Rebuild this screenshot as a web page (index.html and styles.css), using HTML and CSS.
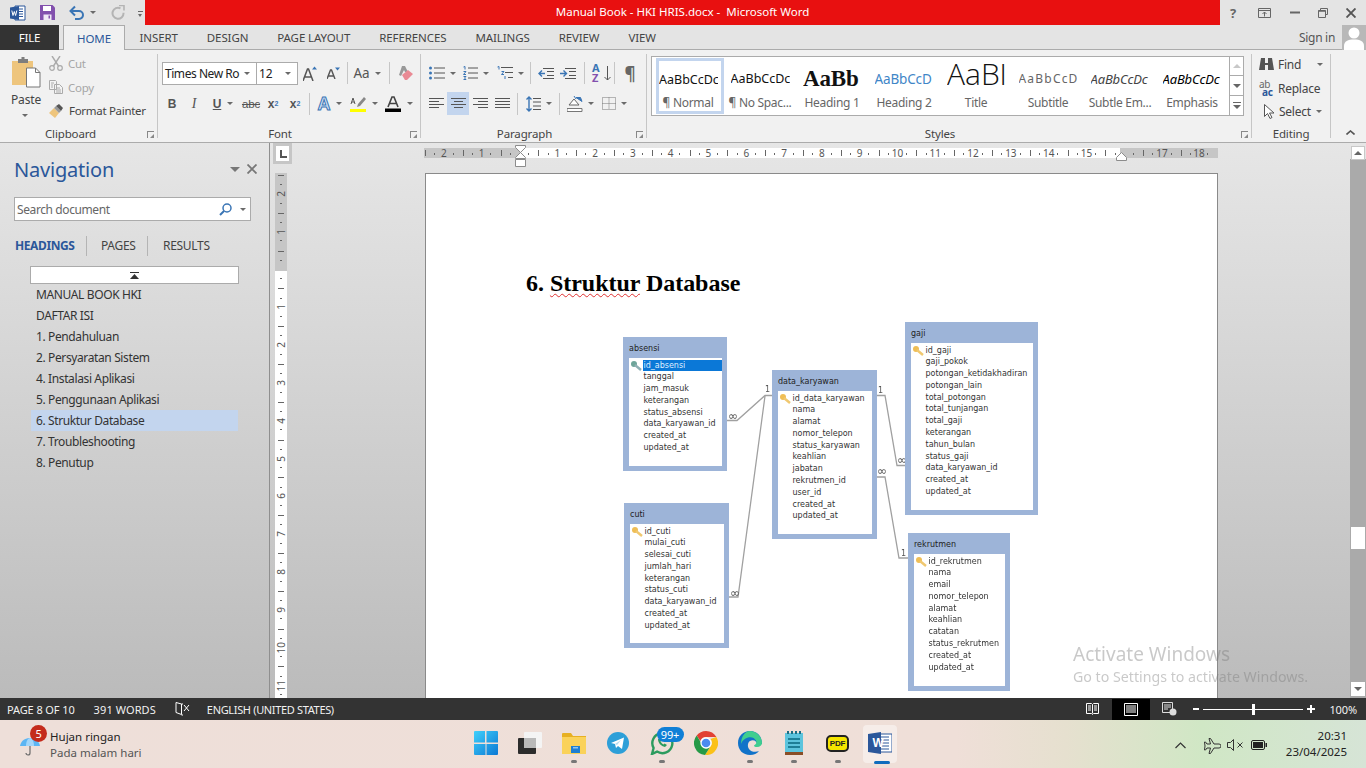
FILE: index.html
```html
<!DOCTYPE html>
<html lang="en">
<head>
<meta charset="utf-8">
<title>Manual Book - HKI HRIS.docx - Microsoft Word</title>
<link rel="stylesheet" href="styles.css">
</head>
<body>
<div class="app">
  <header class="titlebar">
    <div class="qat">
      <svg class="q-word" width="16" height="16" viewBox="0 0 16 16"><path d="M5 1h10v14H5z" fill="#fff" stroke="#2b579a"/><path d="M8 4h5M8 6.500h5M8 9h5M8 11.500h5" stroke="#2b579a"/><path d="M0 2.500 9 1v14L0 13.500z" fill="#2b579a"/><path d="M1.800 5.500l1.200 5 1.300-4 1.300 4 1.200-5" fill="none" stroke="#fff" stroke-width="1"/></svg>
      <svg class="q-save" width="15" height="15" viewBox="0 0 15 15"><path d="M0 0h12.500L15 2.500V15H0z" fill="#8250ad"/><path d="M3 1h8v5H3z" fill="#fff"/><path d="M3.500 9.500h8V15h-8z" fill="#f0e8f6"/><path d="M8.500 10.500h1.500v3H8.500z" fill="#8250ad"/></svg>
      <svg class="q-undo" width="15" height="15" viewBox="0 0 15 15"><path d="M2 6h8a3.700 3.700 0 0 1 0 8H6" fill="none" stroke="#3a75b5" stroke-width="2"/><path d="M6 1.500 1.500 6 6 10.500" fill="none" stroke="#3a75b5" stroke-width="2"/></svg>
      <span class="caret q-c1"></span>
      <svg class="q-redo" width="14" height="15" viewBox="0 0 14 15"><path d="M9.500 3.300a5.500 5.500 0 1 0 3 4.500" fill="none" stroke="#b4b4b4" stroke-width="2"/><path d="M8 .5h5v5" fill="none" stroke="#b4b4b4" stroke-width="1.600"/></svg>
      <span class="q-custom"><i></i><span class="caret"></span></span>
    </div>
    <div class="title-red">Manual Book - HKI HRIS.docx -&nbsp; Microsoft Word</div>
    <div class="winctl">
      <span class="w-help">?</span>
      <svg width="13" height="10" viewBox="0 0 13 10"><path d="M.5.500h12v9H.5zM.5 2.500h12M6.500 8.500V4M4.500 6l2-2 2 2" fill="none" stroke="#666"/></svg>
      <svg width="10" height="3" viewBox="0 0 10 3"><path d="M0 1.500h10" stroke="#666" stroke-width="2"/></svg>
      <svg width="10" height="10" viewBox="0 0 10 10"><path d="M2.500 2.500V.5h7v6H7.500M.5 2.500h7v7h-7z" fill="none" stroke="#666"/><path d="M.5 3h7" stroke="#666" stroke-width="1.500"/></svg>
      <svg width="10" height="10" viewBox="0 0 10 10"><path d="M.5.500l9 9M9.500.500l-9 9" stroke="#555" stroke-width="1.900"/></svg>
    </div>
  </header>

  <nav class="tabs">
    <span class="tab-file">FILE</span>
    <span class="tab tab-on">HOME</span>
    <span class="tab">INSERT</span>
    <span class="tab">DESIGN</span>
    <span class="tab">PAGE LAYOUT</span>
    <span class="tab">REFERENCES</span>
    <span class="tab">MAILINGS</span>
    <span class="tab">REVIEW</span>
    <span class="tab">VIEW</span>
    <span class="signin">Sign in</span>
    <span class="avatar"><svg width="24" height="25" viewBox="0 0 24 25"><circle cx="12" cy="8" r="5.500" fill="#fff"/><path d="M2 25v-4c0-5 4-6.500 10-6.500S22 16 22 21v4z" fill="#fff"/></svg></span>
  </nav>

  <section class="ribbon">
    <div class="group g-clip">
      <div class="clip-body">
        <div class="paste">
          <svg width="29" height="31" viewBox="0 0 29 31"><path d="M0 4h21v24H0z" fill="#eec57d"/><path d="M6 2h3.500V0h3v2H16v4H6z" fill="#7d7d7d"/><path d="M14.500 11h9l4.500 4.500V30H14.500z" fill="#fff" stroke="#777"/><path d="M23.500 11v4.500H28" fill="none" stroke="#777"/></svg>
          <span class="paste-l">Paste</span>
          <span class="caret"></span>
        </div>
        <div class="clip-list">
          <div class="clip-item off"><svg width="14" height="15" viewBox="0 0 14 15"><path d="M3 0l6.500 10M11 0 4.500 10" stroke="#aaa" stroke-width="1.400" fill="none"/><circle cx="3" cy="12" r="2.300" fill="none" stroke="#aaa" stroke-width="1.200"/><circle cx="11" cy="12" r="2.300" fill="none" stroke="#aaa" stroke-width="1.200"/></svg>Cut</div>
          <div class="clip-item off"><svg width="14" height="14" viewBox="0 0 14 14"><path d="M.5.500h6l1 1v8H.5zM5.500 4.500h5l3 3v6h-8z" fill="#f3f3f3" stroke="#aaa"/><path d="M2 3h3M2 5h2M2 7h2M7 8h4M7 10h5M7 12h5" stroke="#aaa"/></svg>Copy</div>
          <div class="clip-item"><svg width="15" height="14" viewBox="0 0 15 14"><path d="M0 9l5-5 5 5-4 5z" fill="#eec57d"/><path d="M5 4l5 5 2-2-5-5z" fill="#999"/><path d="M7 2l3-2 4 4-2 3z" fill="#555"/></svg>Format Painter</div>
        </div>
      </div>
      <div class="g-label">Clipboard</div>
      <span class="launcher"></span>
    </div>

    <div class="group g-font">
      <div class="rrow r1">
        <div class="select s-font"><span>Times New Ro</span><span class="caret"></span></div>
        <div class="select s-size"><span>12</span><span class="caret"></span></div>
        <span class="cell w24"><svg width="14" height="15" viewBox="0 0 14 15"><path d="M0 15 4.500 3h1L10 15M2 11h6.500" fill="none" stroke="#555" stroke-width="1.500"/><path d="M9 3.500l2.500-3 2.500 3z" fill="#3a75b5"/></svg></span>
        <span class="cell w23"><svg width="13" height="12" viewBox="0 0 13 12"><path d="M0 12 3.500 3h1L8 12M1.500 9h5" fill="none" stroke="#555" stroke-width="1.400"/><path d="M8 .5h5L10.500 3.500z" fill="#3a75b5"/></svg></span>
        <span class="sep s4"></span>
        <span class="cell w37 gap"><span class="aa">Aa</span><span class="caret"></span></span>
        <span class="sep s6"></span>
        <span class="cell w27"><svg width="15" height="15" viewBox="0 0 15 15"><path d="M4 0h3l3 6H7L6 4 3 10 1 9z" fill="#999"/><path d="M4 9l6-5 5 4-6 6H7z" fill="#e98a94"/></svg></span>
      </div>
      <div class="rrow r2">
        <span class="cell w20 ltr b">B</span>
        <span class="cell w24 ltr it">I</span>
        <span class="cell w34 gap"><span class="ltr u">U</span><span class="caret"></span></span>
        <span class="cell w22 ltr st">abc</span>
        <span class="cell w22 ltr b">x<sub class="sb">2</sub></span>
        <span class="cell w22 ltr b">x<sup class="sp">2</sup></span>
        <span class="sep s8"></span>
        <span class="cell w32 gap"><span class="txteff">A</span><span class="caret"></span></span>
        <span class="cell w36 gap"><svg width="16" height="16" viewBox="0 0 16 16"><path d="M0 13h16v3H0z" fill="#ff0"/><path d="M7 11l1-3 6-7 2 2-6 7z" fill="#888"/><path d="M1 8 3 2l2 6M1.800 6h2.500" fill="none" stroke="#555"/></svg><span class="caret"></span></span>
        <span class="cell w34 gap"><svg width="16" height="16" viewBox="0 0 16 16"><path d="M0 12.500h16V16H0z" fill="#000"/><path d="M3 11 7 1h2l4 10M5 7.500h6" fill="none" stroke="#444" stroke-width="1.600"/></svg><span class="caret"></span></span>
      </div>
      <div class="g-label">Font</div>
      <span class="launcher"></span>
    </div>

    <div class="group g-para">
      <div class="rrow r1">
        <span class="cell w34 lft gap5"><svg width="16" height="14" viewBox="0 0 16 14"><path d="M5 2h11M5 7h11M5 12h11" stroke="#555"/><circle cx="1.500" cy="2" r="1.500" fill="#3a75b5"/><circle cx="1.500" cy="7" r="1.500" fill="#3a75b5"/><circle cx="1.500" cy="12" r="1.500" fill="#3a75b5"/></svg><span class="caret"></span></span>
        <span class="cell w34 lft gap5"><svg width="15" height="14" viewBox="0 0 15 14"><path d="M5 2h10M5 7h10M5 12h10" stroke="#555"/><path d="M.5 1 2 .5v3M.5 5.500h2.500L.5 8.500H3M.5 10.500H3L1.500 12 3 13.500H.5" fill="none" stroke="#3a75b5"/></svg><span class="caret"></span></span>
        <span class="cell w33 lft gap5"><svg width="16" height="14" viewBox="0 0 16 14"><path d="M4 1.500h12M8 6.500h8M11 11.500h5" stroke="#555"/><path d="M.5 1 2 .5v3M4.500 5.500H7L4.500 8.500H7M8 10v3" fill="none" stroke="#3a75b5"/></svg><span class="caret"></span></span>
        <span class="sep m7"></span>
        <span class="cell w22 lft"><svg width="16" height="13" viewBox="0 0 16 13"><path d="M5 1.500h11M9 4.500h7M9 8.500h7M5 11.500h11" stroke="#555"/><path d="M7 6.500H1M4 3.500l-3 3 3 3" fill="none" stroke="#3a75b5" stroke-width="1.400"/></svg></span>
        <span class="cell w24 lft"><svg width="16" height="13" viewBox="0 0 16 13"><path d="M5 1.500h11M9 4.500h7M9 8.500h7M5 11.500h11" stroke="#555"/><path d="M0 6.500h6M3.500 3.500l3 3-3 3" fill="none" stroke="#3a75b5" stroke-width="1.400"/></svg></span>
        <span class="sep m7"></span>
        <span class="cell w22 lft"><span class="sortaz"><span class="az-a">A</span><span class="az-z">Z</span></span><svg width="7" height="15" viewBox="0 0 7 15"><path d="M3.500 0v14M.5 11l3 3 3-3" fill="none" stroke="#555"/></svg></span>
        <span class="sep m8"></span>
        <span class="cell w14 pil">¶</span>
      </div>
      <div class="rrow r2">
        <span class="cell w18 lft"><svg width="15" height="13" viewBox="0 0 15 13"><path d="M0 1.500h15M0 4.500h10M0 7.500h15M0 10.500h10" stroke="#555"/></svg></span>
        <span class="cell w22 on"><svg width="15" height="13" viewBox="0 0 15 13"><path d="M0 1.500h15M3 4.500h9M0 7.500h15M3 10.500h9" stroke="#555"/></svg></span>
        <span class="cell w22 lft m4"><svg width="15" height="13" viewBox="0 0 15 13"><path d="M0 1.500h15M5 4.500h10M0 7.500h15M5 10.500h10" stroke="#555"/></svg></span>
        <span class="cell w22 lft"><svg width="15" height="13" viewBox="0 0 15 13"><path d="M0 1.500h15M0 4.500h15M0 7.500h15M0 10.500h15" stroke="#555"/></svg></span>
        <span class="sep m8"></span>
        <span class="cell w33 lft gap5"><svg width="15" height="16" viewBox="0 0 15 16"><path d="M7 2.500h8M7 6h8M7 10h8M7 13.500h8" stroke="#555"/><path d="M3 1v14M.5 3.500 3 1l2.500 2.500M.5 12.500 3 15l2.500-2.500" fill="none" stroke="#3a75b5" stroke-width="1.400"/></svg><span class="caret"></span></span>
        <span class="sep m7"></span>
        <span class="cell w35 lft gap5"><svg width="16" height="16" viewBox="0 0 16 16"><path d="M0 12.500h15v3H0z" fill="#fff" stroke="#777"/><path d="M2 9l5-6 5 6H2z" fill="#fff" stroke="#666"/><path d="M7 0l2 3M9 1.500h4.500l1.500 4z" fill="#3a75b5" stroke="#3a75b5"/></svg><span class="caret"></span></span>
        <span class="cell w30 lft gap5"><svg width="14" height="13" viewBox="0 0 14 13"><path d="M.5.500h13v12H.5zM7 .5v12M.5 6.500h13" fill="none" stroke="#777" stroke-dasharray="1 1"/></svg><span class="caret"></span></span>
      </div>
      <div class="g-label">Paragraph</div>
      <span class="launcher"></span>
    </div>

    <div class="group g-styles">
      <div class="gallery">
        <div class="sitem sel"><span class="sample sm-n">AaBbCcDc</span><span class="slabel">¶ Normal</span></div>
        <div class="sitem wide"><span class="sample sm-n">AaBbCcDc</span><span class="slabel">¶ No Spac...</span></div>
        <div class="sitem wide"><span class="sample sm-h1">AaBb</span><span class="slabel">Heading 1</span></div>
        <div class="sitem wide"><span class="sample sm-h2">AaBbCcD</span><span class="slabel">Heading 2</span></div>
        <div class="sitem wide"><span class="sample sm-t">AaBl</span><span class="slabel sl-t">Title</span></div>
        <div class="sitem wide"><span class="sample sm-st">AaBbCcD</span><span class="slabel">Subtitle</span></div>
        <div class="sitem wide"><span class="sample sm-se">AaBbCcDc</span><span class="slabel">Subtle Em...</span></div>
        <div class="sitem wide"><span class="sample sm-em">AaBbCcDc</span><span class="slabel">Emphasis</span></div>
        <div class="gscroll">
          <span class="gbtn"><i class="tri-up dim"></i></span>
          <span class="gbtn"><i class="tri-dn"></i></span>
          <span class="gbtn more"><i class="bar"></i><i class="tri-dn"></i></span>
        </div>
      </div>
      <div class="g-label">Styles</div>
      <span class="launcher"></span>
    </div>

    <div class="group g-edit">
      <div class="edit-list">
        <div class="edit-item"><svg width="15" height="13" viewBox="0 0 15 13"><path d="M2 0h4v5h3V0h4l2 12H9V7H6v5H0z" fill="#555"/></svg><span>Find</span><span class="caret c-find"></span></div>
        <div class="edit-item"><span class="replace"><span class="r-ab">ab</span><span class="r-ac">ac</span></span><span>Replace</span></div>
        <div class="edit-item sel-i"><svg width="11" height="15" viewBox="0 0 11 15"><path d="M.5.500v12l3-3 2.500 5 2-1-2.500-4.500h4.500z" fill="#fff" stroke="#555"/></svg><span>Select</span><span class="caret c-sel"></span></div>
      </div>
      <div class="g-label">Editing</div>
    </div>
    <svg class="collapse" width="9" height="5" viewBox="0 0 9 5"><path d="M.5 4.500l4-3.500 4 3.500" fill="none" stroke="#555" stroke-width="1.600"/></svg>
  </section>

  <main class="main">
    <aside class="navpane">
      <div class="nav-head"><span class="nav-title">Navigation</span><i class="nav-drop"></i><svg width="10" height="10" viewBox="0 0 10 10"><path d="M.5.500l9 9M9.500.500l-9 9" stroke="#777" stroke-width="1.800"/></svg></div>
      <div class="nav-search"><span>Search document</span><svg width="13" height="13" viewBox="0 0 13 13"><circle cx="8" cy="5" r="4" fill="none" stroke="#3a75b5" stroke-width="1.500"/><path d="M5 8l-4 4" stroke="#3a75b5" stroke-width="2"/></svg><span class="caret"></span></div>
      <div class="nav-tabs"><span class="nt nt-on">HEADINGS</span><span class="nt pg">PAGES</span><span class="nt rs">RESULTS</span></div>
      <div class="nav-list">
        <div class="nav-top"><svg width="9" height="7" viewBox="0 0 9 7"><path d="M0 .5h9" stroke="#333"/><path d="M4.500 2 9 7H0z" fill="#333"/></svg></div>
        <div class="ni">MANUAL BOOK HKI</div>
        <div class="ni">DAFTAR ISI</div>
        <div class="ni">1. Pendahuluan</div>
        <div class="ni">2. Persyaratan Sistem</div>
        <div class="ni">4. Instalasi Aplikasi</div>
        <div class="ni">5. Penggunaan Aplikasi</div>
        <div class="ni ni-on">6. Struktur Database</div>
        <div class="ni">7. Troubleshooting</div>
        <div class="ni">8. Penutup</div>
      </div>
    </aside>

    <div class="work">
      <div class="workmain">
        <div class="rulerrow">
          <span class="tabbtn"><i></i></span>
          <div class="hruler">
            <span class="hu">2</span><span class="hu">1</span><span class="hu"></span><span class="hu">1</span><span class="hu">2</span><span class="hu">3</span><span class="hu">4</span><span class="hu">5</span><span class="hu">6</span><span class="hu">7</span><span class="hu">8</span><span class="hu">9</span><span class="hu">10</span><span class="hu">11</span><span class="hu">12</span><span class="hu">13</span><span class="hu">14</span><span class="hu">15</span><span class="hu"></span><span class="hu">17</span><span class="hu hu-end">18</span>
            <svg class="mk-left" width="11" height="22" viewBox="0 0 11 22"><path d="M.5.500h10v2L5.500 7.500.5 2.500zM5.500 7.500l5 5v1h-10v-1zM.5 14.500h10v7H.5z" fill="#fff" stroke="#8c8c8c"/></svg>
            <svg class="mk-right" width="11" height="9" viewBox="0 0 11 9"><path d="M5.500.5l5 5v3H.5v-3z" fill="#fff" stroke="#8c8c8c"/></svg>
          </div>
        </div>
        <div class="docrow">
          <div class="vruler">
            <span class="vu"><b>2</b></span><span class="vu"><b>1</b></span><span class="vu"></span><span class="vu"><b>1</b></span><span class="vu"><b>2</b></span><span class="vu"><b>3</b></span><span class="vu"><b>4</b></span><span class="vu"><b>5</b></span><span class="vu"><b>6</b></span><span class="vu"><b>7</b></span><span class="vu"><b>8</b></span><span class="vu"><b>9</b></span><span class="vu"><b>10</b></span><span class="vu"><b>11</b></span>
          </div>
          <article class="page">
            <h1 class="doc-h">6. <span class="sp-err">Struktur</span> Database</h1>
            <div class="er">
              <svg class="er-lines" width="791" height="524" viewBox="0 0 791 524">
                <g fill="none" stroke="#a0a0a0" stroke-width="1.300">
                  <path d="M301 246.500h10l28-25h7"/>
                  <path d="M303 423h9l27-201"/>
                  <path d="M451 221.500h8l12 70h8"/>
                  <path d="M451 303h8l14 81h9"/>
                </g>
              </svg>
              <span class="card c1a">1</span><span class="card c2a">1</span><span class="card c3a">1</span>
              <span class="card inf i1">∞</span><span class="card inf i2">∞</span><span class="card inf i3">∞</span><span class="card inf i4">∞</span>

              <section class="tbl t-abs">
                <div class="tbl-t">absensi</div>
                <div class="tbl-b">
                  <div class="row first act"><svg class="key" width="11" height="10" viewBox="0 0 11 10"><circle cx="3" cy="3" r="3" fill="#6ea59a"/><path d="M4 4l6 5" stroke="#8fb0b4" stroke-width="2.400"/></svg><span>id_absensi</span></div>
                  <div class="row">tanggal</div><div class="row">jam_masuk</div><div class="row">keterangan</div><div class="row">status_absensi</div><div class="row">data_karyawan_id</div><div class="row">created_at</div><div class="row">updated_at</div>
                </div>
              </section>

              <section class="tbl t-cuti">
                <div class="tbl-t">cuti</div>
                <div class="tbl-b">
                  <div class="row first"><svg class="key" width="11" height="10" viewBox="0 0 11 10"><circle cx="3" cy="3" r="3" fill="#efbe55"/><path d="M4 4l6 5" stroke="#f0c870" stroke-width="2.400"/></svg>id_cuti</div>
                  <div class="row">mulai_cuti</div><div class="row">selesai_cuti</div><div class="row">jumlah_hari</div><div class="row">keterangan</div><div class="row">status_cuti</div><div class="row">data_karyawan_id</div><div class="row">created_at</div><div class="row">updated_at</div>
                </div>
              </section>

              <section class="tbl t-data">
                <div class="tbl-t">data_karyawan</div>
                <div class="tbl-b">
                  <div class="row first"><svg class="key" width="11" height="10" viewBox="0 0 11 10"><circle cx="3" cy="3" r="3" fill="#efbe55"/><path d="M4 4l6 5" stroke="#f0c870" stroke-width="2.400"/></svg>id_data_karyawan</div>
                  <div class="row">nama</div><div class="row">alamat</div><div class="row">nomor_telepon</div><div class="row">status_karyawan</div><div class="row">keahlian</div><div class="row">jabatan</div><div class="row">rekrutmen_id</div><div class="row">user_id</div><div class="row">created_at</div><div class="row">updated_at</div>
                </div>
              </section>

              <section class="tbl t-gaji">
                <div class="tbl-t">gaji</div>
                <div class="tbl-b">
                  <div class="row first"><svg class="key" width="11" height="10" viewBox="0 0 11 10"><circle cx="3" cy="3" r="3" fill="#efbe55"/><path d="M4 4l6 5" stroke="#f0c870" stroke-width="2.400"/></svg>id_gaji</div>
                  <div class="row">gaji_pokok</div><div class="row">potongan_ketidakhadiran</div><div class="row">potongan_lain</div><div class="row">total_potongan</div><div class="row">total_tunjangan</div><div class="row">total_gaji</div><div class="row">keterangan</div><div class="row">tahun_bulan</div><div class="row">status_gaji</div><div class="row">data_karyawan_id</div><div class="row">created_at</div><div class="row">updated_at</div>
                </div>
              </section>

              <section class="tbl t-rek">
                <div class="tbl-t">rekrutmen</div>
                <div class="tbl-b">
                  <div class="row first"><svg class="key" width="11" height="10" viewBox="0 0 11 10"><circle cx="3" cy="3" r="3" fill="#efbe55"/><path d="M4 4l6 5" stroke="#f0c870" stroke-width="2.400"/></svg>id_rekrutmen</div>
                  <div class="row">nama</div><div class="row">email</div><div class="row">nomor_telepon</div><div class="row">alamat</div><div class="row">keahlian</div><div class="row">catatan</div><div class="row">status_rekrutmen</div><div class="row">created_at</div><div class="row">updated_at</div>
                </div>
              </section>
            </div>
          </article>
        </div>
      </div>
      <div class="vscroll">
        <span class="sb-btn top"><i class="tri-up"></i></span>
        <span class="sb-thumb"></span>
        <span class="sb-btn bot"><i class="tri-dn"></i></span>
      </div>
    </div>
  </main>

  <footer class="status">
    <span class="st-a">PAGE 8 OF 10</span>
    <span class="st-b">391 WORDS</span>
    <svg class="st-ic" width="15" height="14" viewBox="0 0 15 14"><path d="M6.500 2 1 .5v10l5.500 2V2zM6.500 2h1.500M6.500 13h1.500" fill="none" stroke="#fff"/><path d="M9 3l5 6M14 3 9 9" stroke="#fff"/></svg>
    <span class="st-c">ENGLISH (UNITED STATES)</span>
    <div class="st-right">
      <svg width="13" height="12" viewBox="0 0 13 12"><path d="M.5.500h5l1 1 1-1h5v10h-5l-1 1-1-1h-5zM6.500 1.500v9" fill="none" stroke="#fff"/><path d="M2 3h3M2 5h3M2 7h3M8 3h3M8 5h3M8 7h3" stroke="#fff"/></svg>
      <span class="st-active"><svg width="14" height="13" viewBox="0 0 14 13"><path d="M.5.500h13v12H.5z" fill="none" stroke="#fff"/><path d="M2 3h10M2 5h10M2 7h10M2 9h10" stroke="#fff"/></svg></span>
      <svg class="st-web" width="15" height="14" viewBox="0 0 15 14"><path d="M.5.500h10v10H.5z" fill="none" stroke="#ddd"/><path d="M2 3h7M2 5h7M2 7h4" stroke="#ddd"/><circle cx="11" cy="10" r="3.500" fill="#ddd"/></svg>
      <span class="z-m"></span>
      <span class="z-track"><i></i></span>
      <span class="z-p"></span>
      <span class="z-pct">100%</span>
    </div>
  </footer>

  <footer class="taskbar">
    <div class="tb-weather">
      <span class="w-icon">
        <svg width="20" height="20" viewBox="0 0 20 20"><path d="M0 10C1 4 6 2 10 2s9 2 10 8z" fill="#5cb5f3"/><path d="M6 10C6 5 8 2 10 2s4 3 4 8z" fill="#a3d6fa"/><path d="M10 10v7a2 2 0 0 1-4 0" fill="none" stroke="#6b6b6b" stroke-width="1.200"/></svg>
        <span class="w-badge">5</span>
      </span>
      <span class="w-text"><span class="w-1">Hujan ringan</span><span class="w-2">Pada malam hari</span></span>
    </div>
    <div class="tb-apps">
      <span class="app-i"><svg width="24" height="24" viewBox="0 0 24 24"><defs><linearGradient id="win" x1="0" y1="0" x2="1" y2="1"><stop offset="0" stop-color="#3fd0fb"/><stop offset="1" stop-color="#0b78d4"/></linearGradient></defs><path d="M0 1a1 1 0 0 1 1-1h10v11.500H0zM12.500 0H23a1 1 0 0 1 1 1v10.500H12.500zM0 13h11.500v11H1a1 1 0 0 1-1-1zM12.500 13H24v10a1 1 0 0 1-1 1H12.500z" fill="url(#win)"/></svg></span>
      <span class="app-i"><svg width="24" height="22" viewBox="0 0 24 22"><rect x="0" y="6" width="18" height="16" rx="1" fill="#2c2c2c"/><rect x="6" y="0" width="18" height="16" rx="1" fill="#f4f4f4"/><rect x="6" y="6" width="12" height="10" fill="#b9b9b9"/></svg></span>
      <span class="app-i"><svg width="24" height="22" viewBox="0 0 24 22"><path d="M0 2a1 1 0 0 1 1-1h8l2 3h13v18H0z" fill="#e7b022"/><path d="M0 5h24v17H0z" fill="#fad25a"/><path d="M9 14h9v7H9z" fill="#1f7fd3"/><path d="M11 15h5v1.500h-5z" fill="#8ec7f2"/></svg><i class="dot"></i></span>
      <span class="app-i"><svg width="22" height="22" viewBox="0 0 22 22"><circle cx="11" cy="11" r="11" fill="#2d9fd8"/><path d="M4 11 17 5.500 15 17l-4-3-2 2-1-4z" fill="#fff"/><path d="M8 12l6-4-4 5z" fill="#b7dcf0"/></svg></span>
      <span class="app-i"><svg width="24" height="24" viewBox="0 0 24 24"><path d="M2 23l1.600-6A10 10 0 1 1 7 20.600z" fill="none" stroke="#2c9b5e" stroke-width="2.400"/><path d="M8 8c0 4 3 7 7 8l2-2-2.500-1.500-1 1c-1-.5-2.500-2-3-3l1-1L10 7z" fill="#2c9b5e"/></svg><span class="wa-badge">99+</span><i class="dot"></i></span>
      <span class="app-i"><svg width="24" height="24" viewBox="0 0 24 24"><path d="M12 0a12 12 0 0 1 10.400 6H12a6 6 0 0 0-5.700 4L2.700 4.500A12 12 0 0 1 12 0z" fill="#e24134"/><path d="M22.400 6A12 12 0 0 1 11 24l5.200-8a6 6 0 0 0 .3-8z" fill="#fbc117"/><path d="M2.700 4.500 7.800 13a5 5 0 0 0 8.300 3L11 24A12 12 0 0 1 2.700 4.500z" fill="#269a47"/><circle cx="12" cy="12" r="5" fill="#4b8bf0" stroke="#fff" stroke-width="1.300"/></svg></span>
      <span class="app-i"><svg width="24" height="24" viewBox="0 0 24 24"><path d="M12 0C5 0 0 5 0 12c0 7 5 12 12 12 4 0 7-1.500 9-4-3 1.500-8 1-10-2-2-3-1-7 1-8 4-2 7 1 7 3h5C24 5 19 0 12 0z" fill="#1173c9"/><path d="M12 0c6 0 12 5 12 12 0 2-2 4-5 4-1.500 0-3-.5-3-1.500 2-1 3-3 2-5-1.500-3-5-4-8-3C6.500 7.500 4 10 3 13 3 6 7 0 12 0z" fill="#3fce8f"/></svg><i class="dot"></i></span>
      <span class="app-i"><svg width="18" height="24" viewBox="0 0 18 24"><path d="M0 2h18v20H0z" fill="#5cc4dd"/><path d="M0 21h18v3H0z" fill="#8a4e27"/><path d="M3 7h12v2H3zM3 11h12v2H3zM3 15h12v2H3z" fill="#1d7f97"/><path d="M2 0h2v3H2zM6 0h2v3H6zM10 0h2v3h-2zM14 0h2v3h-2z" fill="#1d6d83"/></svg><i class="dot"></i></span>
      <span class="app-i"><span class="pdf">PDF</span><i class="dot"></i></span>
      <span class="app-i active"><svg width="24" height="22" viewBox="0 0 24 22"><path d="M7 2h17v18H7z" fill="#fff" stroke="#2b579a"/><path d="M13 5h8M13 8h8M13 11h8M13 14h8M13 17h8" stroke="#2b579a"/><path d="M0 2 13 0v22L0 20z" fill="#2b579a"/></svg><span class="w-letter">W</span><i class="dot-on"></i></span>
    </div>
    <div class="tb-tray">
      <svg width="11" height="7" viewBox="0 0 11 7"><path d="M.5 6l5-5 5 5" fill="none" stroke="#333" stroke-width="1.200"/></svg>
      <svg class="tr-plane" width="17" height="16" viewBox="0 0 17 16"><path d="M5 .5h1.500L10 6h5a1.500 1.500 0 0 1 0 4h-5l-3.500 5.500H5L6.500 10H3l-1.500 2H.5L1 8 .5 4h1L3 6h3.500z" fill="none" stroke="#333"/></svg>
      <svg class="tr-vol" width="17" height="12" viewBox="0 0 17 12"><path d="M.5 3.500h3l3-3v11l-3-3h-3z" fill="none" stroke="#333"/><path d="M10.500 3.500l5 5M15.500 3.500l-5 5" stroke="#333"/></svg>
      <svg class="tr-bat" width="16" height="10" viewBox="0 0 16 10"><rect x=".5" y=".5" width="13" height="9" rx="1.500" fill="none" stroke="#222"/><rect x="2" y="2" width="10" height="6" fill="#222"/><path d="M14.500 3h1.500v4h-1.500z" fill="#222"/></svg>
      <span class="clock"><span>20:31</span><span>23/04/2025</span></span>
    </div>
  </footer>
</div>
<div class="activate"><span class="ac-1">Activate Windows</span><span class="ac-2">Go to Settings to activate Windows.</span></div>
</body>
</html>
```

FILE: styles.css
```css
* { box-sizing: border-box; }
html, body { margin: 0; padding: 0; width: 1366px; height: 768px; overflow: hidden; }
body { font-family: "Noto Sans", "Open Sans", sans-serif; font-size: 11.500px; color: #444; position: relative; letter-spacing: -.15px; }
svg { display: block; flex: none; }
.app { display: flex; flex-direction: column; width: 1366px; height: 768px; background: #e4e4e4; }

.caret { display: inline-block; flex: none; width: 0; height: 0; border-left: 3px solid transparent; border-right: 3px solid transparent; border-top: 3px solid #6a6a6a; }

/* title bar */
.titlebar { display: flex; height: 25px; background: #e4e4e4; flex: none; }
.qat { width: 145px; display: flex; align-items: center; padding-left: 10px; flex: none; }
.q-save { margin-left: 14px; }
.q-undo { margin-left: 14px; }
.q-c1 { margin-left: 6px; }
.q-redo { margin-left: 15px; }
.q-custom { display: flex; flex-direction: column; gap: 2px; margin-left: 13px; margin-top: 2px; }
.q-custom i { width: 5px; height: 1px; background: #666; }
.q-custom .caret { border-left-width: 2.500px; border-right-width: 2.500px; }
.title-red { width: 1075px; background: #e81010; color: #fff; height: 24.500px; display: flex; align-items: center; justify-content: center; font-size: 11.500px; padding-bottom: 1px; letter-spacing: 0; }
.winctl { flex: 1; display: flex; align-items: center; padding-left: 10px; justify-content: space-between; padding-right: 10px; }
.w-help { font-weight: 700; font-size: 13px; color: #666; width: 10px; }

/* tabs */
.tabs { display: flex; height: 25px; align-items: stretch; background: #e4e4e4; flex: none; border-bottom: 1px solid #ababab; font-size: 11.500px; color: #444; position: relative; }
.tab-file { width: 59px; background: #333; color: #fff; display: flex; align-items: center; justify-content: center; margin-right: 4px; height: 25px; }
.tab { padding: 0 14.500px; display: flex; align-items: center; height: 25px; letter-spacing: -.1px; }
.tab-on { width: 62px; padding: 0; justify-content: center; background: #f1f1f1; color: #2b579a; border: 1px solid #ababab; border-bottom: 0; height: 25px; z-index: 1; }
.signin { margin-left: auto; align-self: center; margin-right: 7px; color: #555; font-size: 12px; letter-spacing: -.3px; }
.avatar { width: 24px; background: #b8b8b8; height: 25px; overflow: hidden; }

/* ribbon */
.ribbon { height: 93px; flex: none; background: #f1f1f1; border-bottom: 1px solid #ababab; display: flex; align-items: flex-start; padding-top: 4px; position: relative; }
.group { position: relative; height: 84px; border-right: 1px solid #c6c6c6; flex: none; }
.g-clip { width: 158px; }
.g-font { width: 263px; padding-left: 4px; padding-top: 7px; }
.g-para { width: 226px; padding-left: 8px; padding-top: 7px; }
.g-styles { width: 605px; padding-left: 4px; padding-top: 2px; }
.g-edit { width: 79px; }
.g-label { position: absolute; left: 0; right: 0; bottom: -4px; height: 16px; line-height: 16px; text-align: center; font-size: 11.500px; color: #444; }
.g-clip .g-label { padding-right: 16px; }
.g-font .g-label, .g-para .g-label, .g-styles .g-label { padding-right: 18px; }
.launcher { position: absolute; right: 3px; bottom: 0; width: 7px; height: 7px; border-left: 1px solid #888; border-top: 1px solid #888; }
.launcher::after { content: ""; position: absolute; right: 0; bottom: 0; width: 4px; height: 4px; background: #888; clip-path: polygon(100% 0, 100% 100%, 0 100%); }
.collapse { margin-left: 15px; margin-top: 76px; }

.clip-body { display: flex; }
.paste { width: 49px; padding-top: 3px; padding-left: 12px; display: flex; flex-direction: column; align-items: flex-start; }
.paste-l { font-size: 12px; margin-left: -1px; margin-top: 4px; line-height: 16px; color: #444; width: 30px; }
.paste .caret { margin-top: 6px; margin-left: 10px; }
.clip-list { display: flex; flex-direction: column; padding-top: 11px; }
.clip-item { display: flex; align-items: center; gap: 5px; height: 23.500px; white-space: nowrap; color: #444; position: relative; top: -13px; letter-spacing: -.3px; }
.clip-item.off { color: #a6a6a6; }

.rrow { display: flex; align-items: center; height: 24px; }
.r2 { margin-top: 7px; height: 23px; }
.cell { display: inline-flex; align-items: center; justify-content: center; flex: none; height: 23px; }
.w14 { width: 14px; } .w18 { width: 18px; } .w20 { width: 20px; } .w22 { width: 22px; } .w23 { width: 23px; } .w24 { width: 24px; } .w27 { width: 27px; } .w30 { width: 30px; } .w32 { width: 32px; } .w33 { width: 33px; } .w34 { width: 34px; } .w35 { width: 35px; } .w36 { width: 36px; } .w37 { width: 37px; }
.lft { justify-content: flex-start; }
.gap { gap: 6px; }
.gap5 { gap: 5px; }
.m4 { margin-left: 4px; }
.cell.on { background: #c3d5ee; }
.sep { width: 1px; height: 22px; background: #c6c6c6; flex: none; }
.s4 { margin: 0 1px 0 2px; width: 1px; }
.s6 { margin: 0 2px 0 3px; }
.s8 { margin: 0 4px 0 3px; }
.m7 { margin-right: 7px; }
.m8 { margin-right: 8px; }
.select { height: 23px; background: #fff; border: 1px solid #ababab; display: flex; align-items: center; justify-content: space-between; color: #222; font-size: 12px; padding: 0 6px 0 2px; flex: none; }
.s-font { width: 95px; white-space: nowrap; overflow: hidden; letter-spacing: -.45px; }
.s-size { width: 42px; margin-left: -1px; }
.aa { font-size: 13.500px; color: #555; }
.ltr { font-size: 12px; color: #555; font-family: "Liberation Sans", sans-serif; }
.b { font-weight: 700; }
.it { font-style: italic; font-family: "Liberation Serif", serif; font-size: 14px; }
.u { text-decoration: underline; font-weight: 700; font-size: 12px; }
.st { text-decoration: line-through; font-size: 11.500px; }
.sb { font-size: 7px; color: #3a75b5; vertical-align: -3px; line-height: 0; }
.sp { font-size: 7px; color: #3a75b5; vertical-align: 5px; line-height: 0; }
.txteff { font-size: 18px; font-weight: 700; color: #cfe2f6; -webkit-text-stroke: 1px #3a75b5; font-family: "Liberation Sans", sans-serif; line-height: 18px; }
.sortaz { display: flex; flex-direction: column; line-height: 10px; font-size: 11px; font-weight: 700; width: 10px; margin-right: 2px; }
.az-a { color: #3a75b5; }
.az-z { color: #8250ad; }
.pil { font-size: 17px; color: #666; font-weight: 700; }

.gallery { width: 593px; height: 60px; border: 1px solid #ababab; background: #fff; display: flex; padding-left: 4px; }
.sitem { display: flex; flex-direction: column; align-items: center; flex: none; height: 58px; overflow: hidden; }
.sitem.sel { width: 68px; border: 3.500px solid #c3d5ee; padding-top: 7.500px; margin-top: 1px; height: 56px; }
.sitem.sel .sample { margin-left: -3px; }
.sitem.sel .slabel { margin-left: -4px; margin-top: 5px; }
.sitem.wide { width: 72px; padding-top: 11px; }
.sample { display: block; height: 22px; line-height: 22px; width: 60px; overflow: hidden; white-space: nowrap; color: #111; text-align: left; font-size: 12px; }
.sm-n { width: 59px; font-size: 12.500px; letter-spacing: 0; }
.sm-h1 { font-family: "Liberation Serif", serif; font-weight: 700; font-size: 23px; width: 58px; }
.sm-h2 { color: #3f86c7; font-size: 13.500px; width: 59px; }
.sm-t { font-size: 30px; font-weight: 300; width: 58px; height: 26px; margin-top: -4px; line-height: 20px; font-family: "Open Sans", sans-serif; letter-spacing: 0; }
.sm-st { color: #666; letter-spacing: 1.200px; width: 59px; }
.sm-se { color: #444; font-style: italic; width: 59px; font-size: 13px; }
.sm-em { color: #000; font-style: italic; width: 59px; font-size: 13px; }
.slabel { margin-top: 5px; color: #666; font-size: 12px; line-height: 16px; white-space: nowrap; letter-spacing: -.3px; }
.gscroll { width: 15px; margin-left: 1px; border-left: 1px solid #ababab; display: flex; flex-direction: column; flex: none; }
.gbtn { height: 19.500px; display: flex; flex-direction: column; align-items: center; justify-content: center; gap: 2px; border-bottom: 1px solid #ababab; }
.gbtn:last-child { border-bottom: 0; }
.tri-up { width: 0; height: 0; border-left: 4px solid transparent; border-right: 4px solid transparent; border-bottom: 4px solid #666; display: block; }
.tri-up.dim { border-bottom-color: #c8c8c8; }
.tri-dn { width: 0; height: 0; border-left: 4px solid transparent; border-right: 4px solid transparent; border-top: 4px solid #666; display: block; }
.bar { width: 8px; height: 1px; background: #666; display: block; }

.edit-list { display: flex; flex-direction: column; padding-left: 7px; }
.edit-item { display: flex; align-items: center; gap: 4px; height: 23.500px; color: #444; white-space: nowrap; position: relative; top: -1px; font-size: 12px; letter-spacing: -.25px; }
.c-find { margin-left: 12px; }
.c-sel { margin-left: 1px; }
.sel-i { padding-left: 5px; }
.replace { display: flex; flex-direction: column; width: 15px; line-height: 8px; font-size: 10px; }
.r-ab { color: #666; }
.r-ac { color: #2b579a; font-weight: 700; padding-left: 3px; }

/* main */
.main { height: 555px; flex: none; display: flex; min-height: 0; background: linear-gradient(#e6e6e6, #bbb); }
.navpane { width: 270px; flex: none; border-right: 1px solid #8f8f8f; padding-left: 14px; display: flex; flex-direction: column; }
.nav-head { display: flex; align-items: center; height: 54px; flex: none; padding-bottom: 2px; }
.nav-title { font-size: 20px; color: #2b579a; width: 216px; letter-spacing: -.2px; }
.nav-drop { width: 0; height: 0; border-left: 5px solid transparent; border-right: 5px solid transparent; border-top: 5px solid #777; margin: 0 7px 0 0; }
.nav-search { width: 237px; height: 24px; flex: none; background: #fff; border: 1px solid #ababab; display: flex; align-items: center; padding: 0 4px 0 2px; color: #666; font-size: 12px; letter-spacing: -.4px; }
.nav-search span:first-child { flex: 1; }
.nav-search .caret { margin-left: 8px; }
.nav-tabs { display: flex; align-items: center; height: 20px; flex: none; margin-top: 15px; margin-left: 1px; color: #444; }
.nt { line-height: 20px; height: 20px; display: block; font-size: 12px; letter-spacing: -.3px; }
.nt-on { color: #2b579a; font-weight: 700; width: 72px; border-right: 1px solid #b4b4b4; letter-spacing: -.4px; }
.nt.pg { padding-left: 14px; width: 61px; border-right: 1px solid #b4b4b4; }
.nt.rs { padding-left: 15px; }
.nav-list { margin-top: 10px; margin-left: 16px; width: 209px; display: flex; flex-direction: column; flex: none; }
.nav-top { height: 18px; background: #fff; border: 1px solid #ababab; display: flex; align-items: center; justify-content: center; }
.ni { height: 21px; line-height: 21px; padding-left: 6px; color: #333; font-size: 12px; white-space: nowrap; letter-spacing: -.38px; }
.ni-on { background: #c3d5ee; margin-left: 1px; padding-left: 5px; width: 207px; }

.work { flex: 1; display: flex; min-width: 0; }
.workmain { flex: 1; display: flex; flex-direction: column; min-width: 0; }
.rulerrow { height: 30px; flex: none; display: flex; align-items: flex-start; }
.tabbtn { width: 19px; height: 21px; margin-left: 3px; background: #c6c6c6; padding: 3px; display: block; flex: none; }
.tabbtn i { display: block; width: 13px; height: 15px; background: #fff; position: relative; }
.tabbtn i::after { content: ""; position: absolute; left: 4px; top: 4px; width: 5px; height: 6px; border-left: 2px solid #555; border-bottom: 2px solid #555; }
.hruler { margin-left: 132px; margin-top: 5px; width: 794px; height: 10px; display: flex; position: relative; padding-left: 1px;
  background: linear-gradient(90deg, #c6c6c6 96px, #fff 96px, #fff 696px, #c6c6c6 696px); }
.hu { width: 37.800px; flex: none; height: 10px; font-size: 10px; line-height: 10px; color: #555; text-align: center; letter-spacing: 0;
  background:
    linear-gradient(#666, #666) 0 2px / 1px 6px no-repeat,
    linear-gradient(#666, #666) 25% 5px / 1px 2px no-repeat,
    linear-gradient(#666, #666) 75% 5px / 1px 2px no-repeat; }
.hu-end { width: 36px; }
.mk-left { position: absolute; left: 91px; top: -3px; }
.mk-right { position: absolute; left: 692px; top: 4px; }

.docrow { flex: 1; display: flex; min-height: 0; }
.vruler { width: 12px; margin-left: 5px; flex: none; overflow: hidden; padding-top: 2px;
  background: linear-gradient(#c6c6c6 98px, #fff 98px); display: flex; flex-direction: column; }
.vu { height: 37.800px; flex: none; display: flex; align-items: center; justify-content: center; font-size: 10px; color: #555; letter-spacing: 0;
  background:
    linear-gradient(#666, #666) 3px 0 / 6px 1px no-repeat,
    linear-gradient(#666, #666) 5px 25% / 2px 1px no-repeat,
    linear-gradient(#666, #666) 5px 75% / 2px 1px no-repeat; }
.vu b { font-weight: 400; writing-mode: vertical-rl; transform: rotate(180deg); line-height: 12px; }
.page { margin-left: 138px; width: 793px; background: #fff; border: 1px solid #8a8a8a; border-bottom: 0; position: relative; flex: none; overflow: hidden; }
.doc-h { margin: 95px 0 0 100px; font: 700 24px/28px "Liberation Serif", serif; color: #000; white-space: nowrap; letter-spacing: -.03px; }
.sp-err { text-decoration: underline wavy #e03030 1px; text-underline-offset: 2px; }
.er { position: absolute; inset: 0; filter: blur(.3px); letter-spacing: 0; }
.er-lines { position: absolute; left: 0; top: 0; }
.card { position: absolute; font: 8px/8px "DejaVu Sans", sans-serif; color: #555; }
.inf { font-size: 12px; }
.c1a { left: 339px; top: 212px; }
.c2a { left: 452px; top: 213px; }
.c3a { left: 475px; top: 376px; }
.i1 { left: 302px; top: 238px; }
.i2 { left: 304px; top: 415px; }
.i3 { left: 471px; top: 282px; }
.i4 { left: 451px; top: 293px; }

.tbl { position: absolute; background: #9db4d8; padding: 0 5px 5px 6px; display: flex; flex-direction: column; }
.t-abs { left: 197px; top: 163px; width: 104px; height: 134px; }
.t-cuti { left: 198px; top: 329px; width: 105px; height: 145px; }
.t-data { left: 346px; top: 196px; width: 105px; height: 169px; }
.t-gaji { left: 479px; top: 148px; width: 133px; height: 193px; }
.t-rek { left: 482px; top: 359px; width: 102px; height: 158px; }
.tbl-t { height: 21px; font: 8px/23px "DejaVu Sans", sans-serif; color: #222; flex: none; }
.tbl-b { flex: 1; background: #fff; padding-top: 1.500px; }
.row { position: relative; height: 11.800px; padding-left: 14.500px; font: 8px/11.800px "DejaVu Sans", sans-serif; color: #333; white-space: nowrap; }
.key { position: absolute; left: 2px; top: 1px; }
.act span { display: block; background: #0b78d7; color: #dfeeff; margin-left: -1px; padding-left: 1px; }

.vscroll { width: 16px; flex: none; background: linear-gradient(transparent 16px, #aaa 16px); position: relative; display: flex; flex-direction: column; align-items: center; padding-top: 3px; }
.sb-btn { width: 14px; height: 14px; background: #fff; display: flex; align-items: center; justify-content: center; flex: none; border: 1px solid #c8c8c8; }
.sb-btn.bot { border: 0; margin-top: 133px; }
.sb-thumb { width: 14px; height: 22px; background: #fff; margin-top: 367px; flex: none; }

/* status bar */
.status { height: 22px; flex: none; background: #333; color: #f1f1f1; display: flex; align-items: center; padding-left: 7px; font-size: 11px; letter-spacing: -.1px; }
.st-b { margin-left: 19px; letter-spacing: .1px; }
.st-ic { margin-left: 19px; }
.st-c { margin-left: 17px; letter-spacing: -.34px; }
.st-right { margin-left: auto; display: flex; align-items: center; padding-right: 9px; }
.st-active { width: 38px; height: 21px; background: #000; display: flex; align-items: center; justify-content: center; margin-left: 13px; }
.st-web { margin-left: 12px; }
.z-m { width: 6px; height: 2px; background: #fff; margin-left: 16px; }
.z-track { width: 100px; height: 1px; background: #fff; margin-left: 4px; position: relative; display: block; }
.z-track i { position: absolute; left: 49px; top: -5px; width: 3px; height: 11px; background: #fff; }
.z-p { width: 8px; height: 8px; margin-left: 4px; background: linear-gradient(#fff, #fff) center / 8px 2px no-repeat, linear-gradient(#fff, #fff) center / 2px 8px no-repeat; }
.z-pct { margin-left: 14px; }

/* taskbar */
.taskbar { height: 48px; flex: none; display: flex; align-items: stretch; position: relative; background: linear-gradient(90deg, #eedfd9 0, #efdfd8 70%, #e6e0cf 78%, #d0e7c5 88%, #d6e4d6 100%); }
.tb-weather { width: 463.500px; flex: none; display: flex; align-items: center; padding-left: 20px; }
.w-icon { position: relative; width: 20px; height: 20px; display: block; margin-top: 3px; }
.w-badge { position: absolute; left: 10px; top: -11px; width: 17px; height: 17px; border-radius: 50%; background: #c42b1c; color: #fff; font-size: 11px; line-height: 17px; text-align: center; }
.w-text { display: flex; flex-direction: column; margin-left: 10px; font-size: 11.500px; line-height: 16px; margin-top: 1px; letter-spacing: 0; }
.w-1 { color: #222; }
.w-2 { color: #555; }
.tb-apps { display: flex; }
.app-i { width: 44px; flex: none; display: flex; align-items: center; justify-content: center; position: relative; padding-bottom: 2px; }
.app-i.active::before { content: ""; position: absolute; left: 3px; top: 5px; width: 34px; height: 38px; border-radius: 4px; background: #f6ede9; }
.app-i.active svg { position: relative; margin-right: 4px; }
.w-letter { position: absolute; left: 13px; top: 15px; color: #fff; font: 700 12px/16px "Liberation Sans", sans-serif; }
.dot { position: absolute; left: 19px; bottom: 5px; width: 6px; height: 3px; border-radius: 2px; background: #777; }
.dot-on { position: absolute; left: 14px; bottom: 4px; width: 16px; height: 3px; border-radius: 2px; background: #0f6cbd; }
.wa-badge { position: absolute; left: 17px; top: 7px; width: 27px; height: 15px; border-radius: 8px; background: #0f7fd6; color: #fff; font-size: 11px; line-height: 15px; text-align: center; }
.pdf { width: 23px; height: 17px; background: #f5e500; border-radius: 5px; border: 2px solid #222; color: #222; font: 700 8px/13px "Liberation Sans", sans-serif; text-align: center; display: block; }
.tb-tray { margin-left: auto; display: flex; align-items: center; padding-right: 19px; padding-top: 2px; }
.tr-plane { margin-left: 18px; margin-top: 2px; }
.tr-vol { margin-left: 6px; }
.tr-bat { margin-left: 7px; }
.clock { display: flex; flex-direction: column; align-items: flex-end; margin-left: 18px; font-size: 11.500px; line-height: 16px; color: #222; width: 62px; margin-top: -2px; letter-spacing: 0; }

.activate { position: absolute; left: 1073px; top: 643px; display: flex; flex-direction: column; color: rgba(120, 120, 120, .4); white-space: nowrap; pointer-events: none; letter-spacing: 0; }
.ac-1 { font-size: 19px; line-height: 22px; }
.ac-2 { font-size: 14.200px; line-height: 22px; margin-top: 1px; }
```
